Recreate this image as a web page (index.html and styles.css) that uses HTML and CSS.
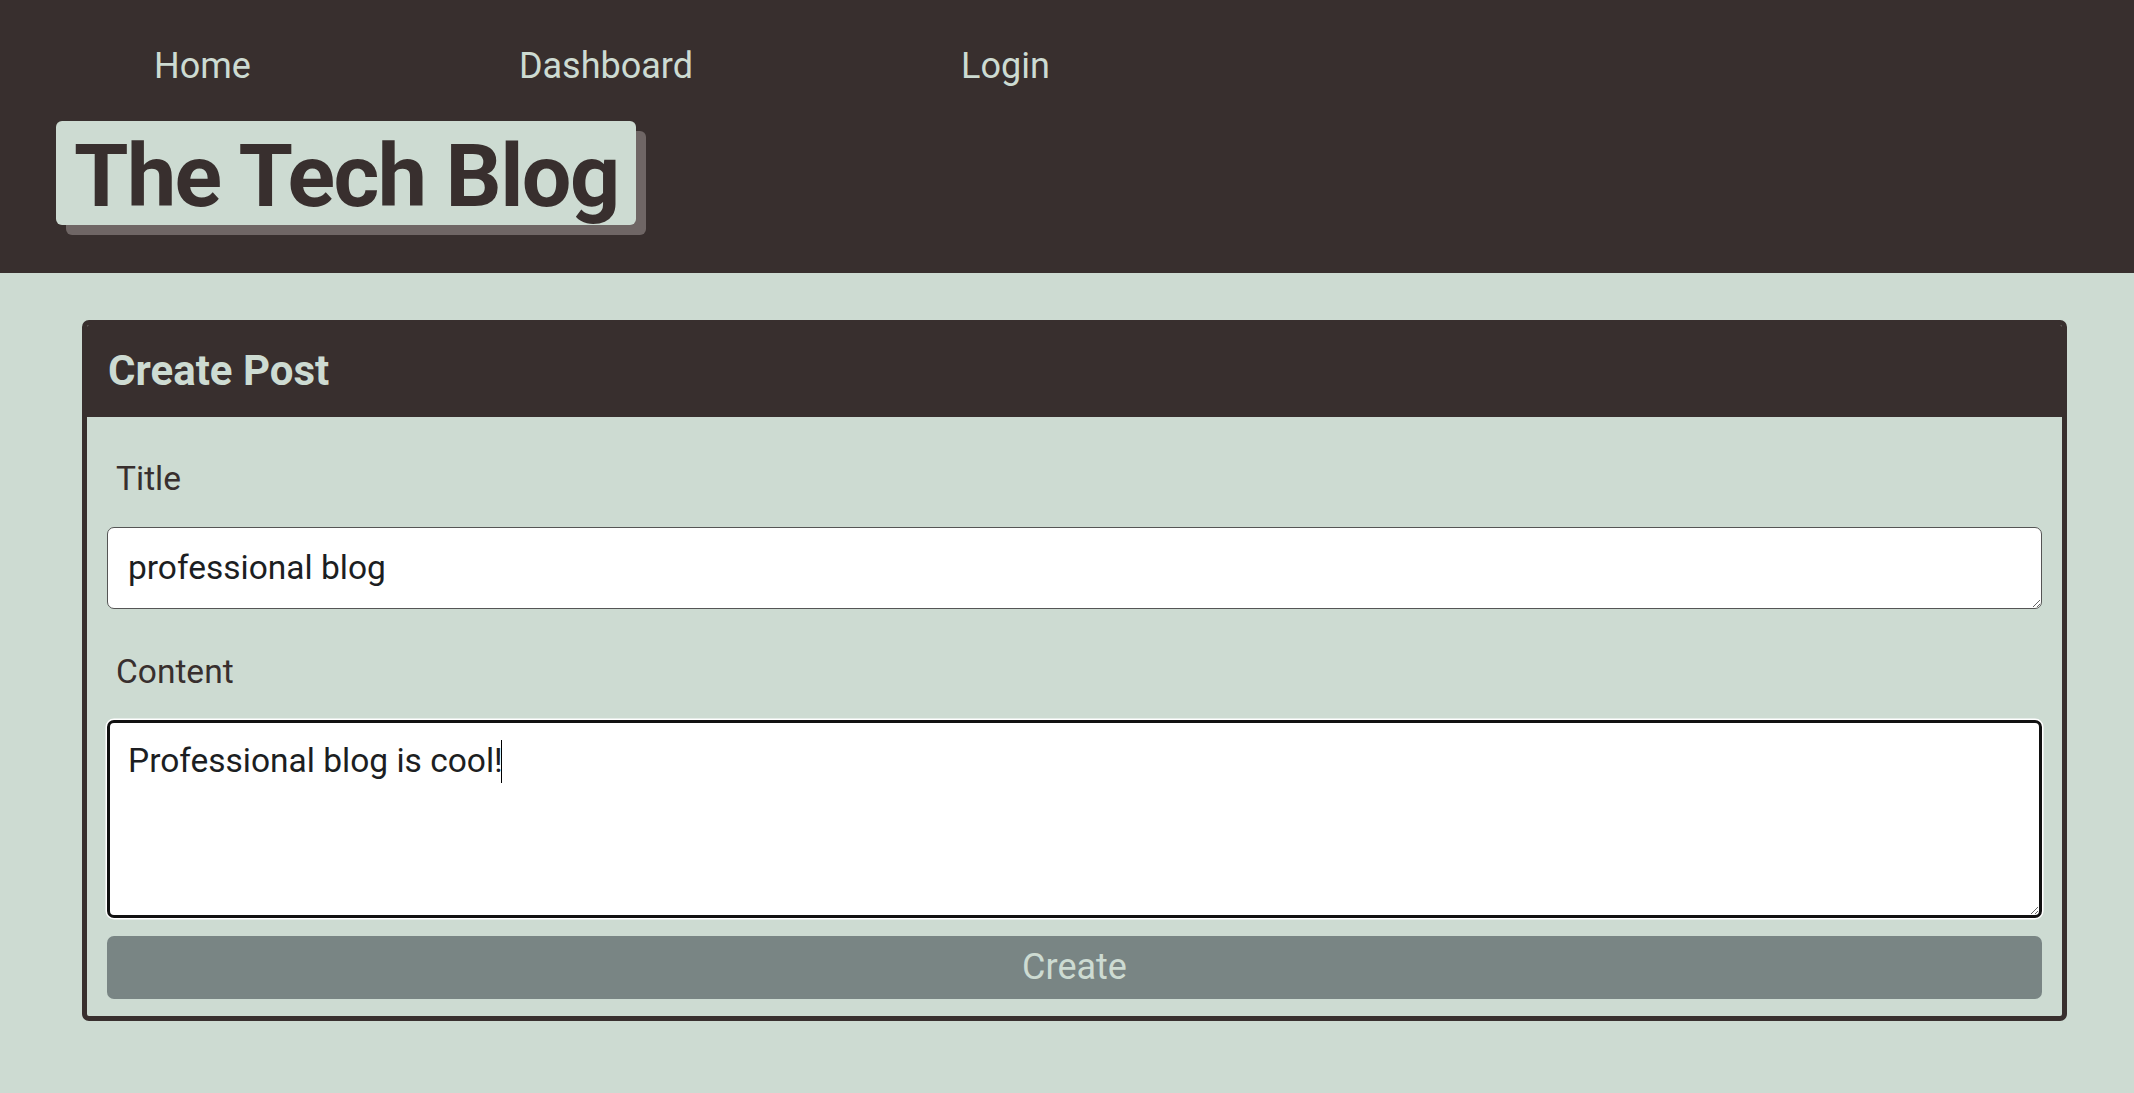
FILE: index.html
```html
<!DOCTYPE html>
<html lang="en">
<head>
<meta charset="utf-8">
<title>The Tech Blog</title>
<link rel="stylesheet" href="styles.css">
</head>
<body>
<header class="site-header">
  <nav class="nav">
    <a class="nav-link" href="#">Home</a>
    <a class="nav-link" href="#">Dashboard</a>
    <a class="nav-link" href="#">Login</a>
  </nav>
  <h1 class="brand">The Tech Blog</h1>
</header>
<main class="main">
  <section class="card">
    <h2 class="card-header">Create Post</h2>
    <form class="card-body">
      <label class="label" for="title">Title</label>
      <textarea class="field field-title" id="title" rows="1">professional blog</textarea>
      <label class="label" for="content">Content</label>
      <div class="field-wrap">
        <textarea class="field field-content is-focused" id="content">Professional blog is cool!</textarea>
        <span class="caret"></span>
      </div>
      <button class="btn" type="button">Create</button>
    </form>
  </section>
</main>
</body>
</html>
```

FILE: styles.css
```css
html, body {
  margin: 0;
  padding: 0;
}

body {
  background: #cddbd2;
  font-family: Roboto, "Noto Sans", "Liberation Sans", sans-serif;
  color: #382f2e;
  min-height: 1093px;
}

.site-header {
  background: #382f2e;
  display: flex;
  flex-direction: column;
  align-items: flex-start;
  padding: 45px 0 48px 0;
}

.nav {
  display: flex;
  gap: 268px;
  padding-left: 154px;
}

.nav-link {
  color: #cddbd2;
  text-decoration: none;
  font-size: 36px;
  line-height: 42px;
}

.brand {
  margin: 34px 0 0 56px;
  padding: 5px 17px 0 18px;
  background: #cddbd2;
  color: #382f2e;
  font-size: 88px;
  font-weight: 700;
  line-height: 99px;
  letter-spacing: -1.6px;
  border-radius: 6px;
  box-shadow: 10px 10px 0 #6f6665;
}

.main {
  padding: 47px 67px 0 82px;
}

.card {
  border: 5px solid #382f2e;
  border-radius: 7px;
  overflow: hidden;
}

.card-header {
  margin: 0;
  background: #382f2e;
  color: #cddbd2;
  font-size: 42px;
  font-weight: 700;
  line-height: 50px;
  padding: 21px;
}

.card-body {
  padding: 17px 20px;
  display: flex;
  flex-direction: column;
}

.label {
  display: block;
  padding-left: 9px;
  margin: 20px 0 23px;
  font-size: 33.5px;
  line-height: 50px;
  color: #382f2e;
}

.field {
  display: block;
  box-sizing: border-box;
  width: 100%;
  margin: 0 0 18px;
  font-family: Roboto, "Noto Sans", "Liberation Sans", sans-serif;
  font-size: 33.5px;
  line-height: 50px;
  color: #1c1e22;
  background: #fff;
  border: 1px solid #555;
  border-radius: 7px;
  padding: 15px 20px;
}

.field-title {
  height: 82px;
}

.field-wrap {
  position: relative;
}

.field-content {
  height: 198px;
}

.is-focused {
  border: 3px solid #111;
  padding: 13px 18px;
  box-shadow: 0 0 0 1.5px #fff;
  outline: none;
}

.caret {
  position: absolute;
  top: 20px;
  left: 394px;
  width: 1px;
  height: 43px;
  background: #000;
}

.btn {
  display: block;
  width: 100%;
  height: 63px;
  border: none;
  border-radius: 7px;
  background: #798584;
  color: #cddbd2;
  font-family: Roboto, "Noto Sans", "Liberation Sans", sans-serif;
  font-size: 36px;
  line-height: 63px;
  padding: 0;
}
```
